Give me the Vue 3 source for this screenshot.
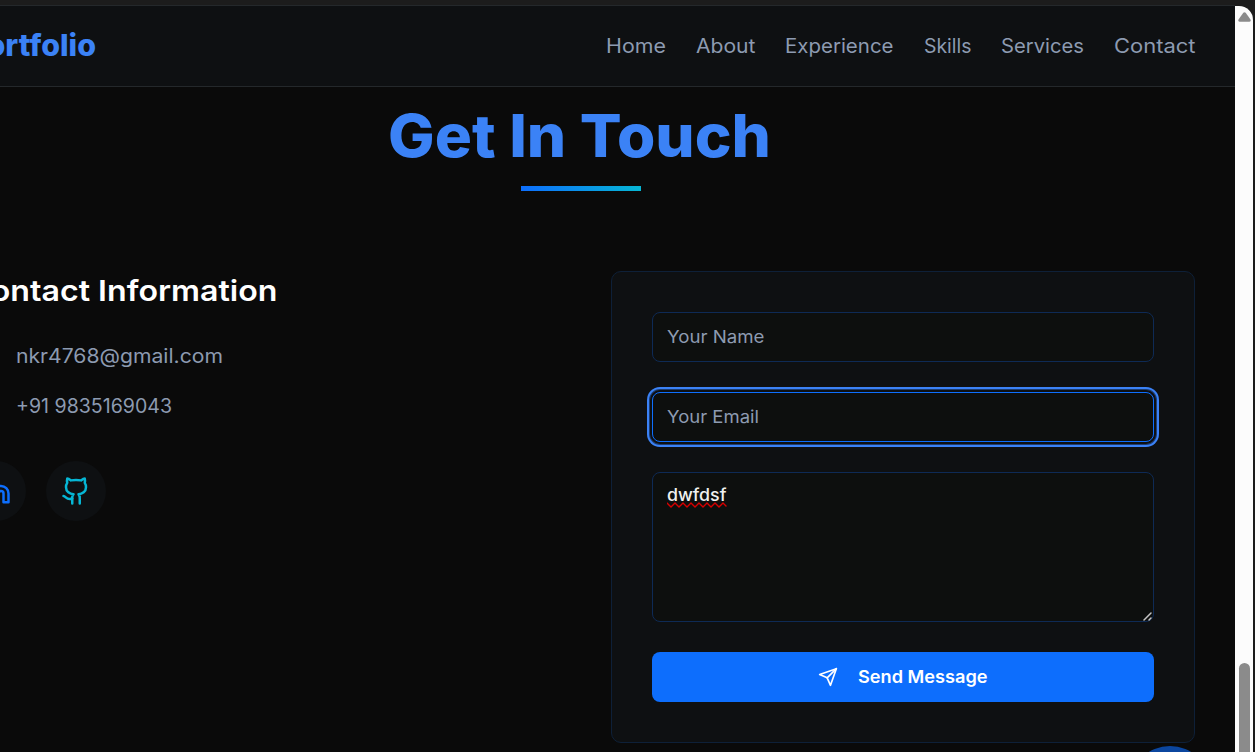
<script setup>
const links = [
  { label: 'Home', width: 60 },
  { label: 'About', width: 59.5 },
  { label: 'Experience', width: 108.5 },
  { label: 'Skills', width: 47.5 },
  { label: 'Services', width: 83 },
  { label: 'Contact', width: 81.5 }
]

// Widens the letterforms of a single line of text so that it spans the given width.
const vFit = {
  mounted(el, { value }) {
    const natural = el.getBoundingClientRect().width
    el.style.width = `${value}px`
    el.style.transform = `scaleX(${value / natural})`
  }
}
</script>

<template>
  <div class="window">
    <div class="page">
      <header class="header">
        <div class="logo"><span v-fit="129" class="fit">Portfolio</span></div>
        <nav class="nav">
          <a v-for="link in links" :key="link.label" v-fit="link.width" class="fit">{{ link.label }}</a>
        </nav>
      </header>

      <main class="contact">
        <h1 class="title"><span v-fit="383" class="fit">Get In Touch</span></h1>
        <div class="rule"></div>

        <div class="columns">
          <section class="info">
            <h2><span v-fit="310.5" class="fit">Contact Information</span></h2>
            <p><span v-fit="207" class="fit">nkr4768@gmail.com</span></p>
            <p><span v-fit="156" class="fit">+91 9835169043</span></p>
            <div class="social">
              <a class="circle linkedin">
                <svg viewBox="0 0 24 24"><path d="M16 8a6 6 0 0 1 6 6v7h-4v-7a2 2 0 0 0-4 0v7h-4v-7a6 6 0 0 1 6-6z" /><path d="M2 9h4v12H2z" /><circle cx="4" cy="4" r="2" /></svg>
              </a>
              <a class="circle github">
                <svg viewBox="0 0 24 24"><path d="M15 22v-4a4.8 4.8 0 0 0-1-3.5c3 0 6-2 6-5.5.08-1.25-.27-2.48-1-3.5.28-1.15.28-2.35 0-3.5 0 0-1 0-3 1.5-2.64-.5-5.36-.5-8 0C6 2 5 2 5 2c-.3 1.15-.3 2.35 0 3.5A5.4 5.4 0 0 0 4 9c0 3.5 3 5.5 6 5.5-.39.49-.68 1.05-.85 1.65S8.93 17.38 9 18v4" /><path d="M9 18c-4.51 2-5-2-7-2" /></svg>
              </a>
            </div>
          </section>

          <form class="card" @submit.prevent>
            <div class="field"><span v-fit="97.5" class="fit">Your Name</span></div>
            <div class="field focused"><span v-fit="92" class="fit">Your Email</span></div>
            <div class="field message">
              <span class="misspelled">
                <span v-fit="59.5" class="fit">dwfdsf</span>
                <svg class="squiggle" viewBox="0 0 60 6"><path d="M0 1 L4 5 L8 1 L12 5 L16 1 L20 5 L24 1 L28 5 L32 1 L36 5 L40 1 L44 5 L48 1 L52 5 L56 1 L59 4" /></svg>
              </span>
              <svg class="grip" viewBox="0 0 9 9"><path d="M1 8 8 1M6 8 8 6" /></svg>
            </div>
            <button class="send">
              <svg viewBox="0 0 24 24"><path d="m22 2-7 20-4-9-9-4Z" /><path d="M22 2 11 13" /></svg>
              <span v-fit="129.5" class="fit">Send Message</span>
            </button>
          </form>
        </div>
      </main>
      <div class="to-top"></div>
    </div>

    <div class="scrollbar">
      <svg class="arrow" viewBox="0 0 13 10"><path d="M5.3.8Q6.5-.4 7.7.8L12.5 7.4Q13.3 9.6 11.5 9.7H1.5Q-.3 9.6.5 7.4Z" /></svg>
      <div class="thumb"></div>
    </div>
  </div>
</template>

<style>
body {
  margin: 0;
  overflow: hidden;
  background: #1c1c1c;
}
</style>

<style scoped>
.window {
  box-sizing: border-box;
  display: flex;
  width: 1255px;
  height: 752px;
  padding: 5px 2px 0 0;
  overflow: hidden;
  background: #1c1c1c;
  font-family: Inter, "Open Sans", sans-serif;
}
.fit {
  display: inline-block;
  text-align: left;
  transform-origin: left center;
  white-space: nowrap;
}
svg {
  fill: none;
  stroke: currentColor;
  stroke-width: 2;
  stroke-linecap: round;
  stroke-linejoin: round;
}
.page {
  position: relative;
  box-sizing: border-box;
  width: 1235px;
  height: 747px;
  overflow: hidden;
  border-top: 1px solid #24282b;
  background: #0a0a0a;
}
.header {
  display: flex;
  align-items: center;
  justify-content: space-between;
  box-sizing: border-box;
  height: 81px;
  padding-right: 39.5px;
  border-bottom: 1px solid #24282b;
  background: #0e1012;
}
.logo {
  width: 129px;
  margin: 0 0 2px -33px;
  color: #3b82f6;
  font-size: 30px;
  font-weight: 800;
}
.nav {
  display: flex;
  gap: 30px;
  color: #8d9bb1;
  font-size: 19.5px;
  line-height: 30px;
}
.contact { margin: 0 40px 0 -33px; }
.title {
  margin: 0 3px 0 0;
  padding-top: 9px;
  color: #3b82f6;
  font-size: 59px;
  font-weight: 800;
  line-height: 80px;
  text-align: center;
}
.rule {
  width: 120px;
  height: 5px;
  margin: 10px auto 80px;
  background: linear-gradient(90deg, #0d6efd, #06b6d4);
}
.columns {
  display: grid;
  grid-template-columns: 1fr 1fr;
  gap: 60px;
}
h2 {
  margin: 0 0 30px;
  color: #fff;
  font-size: 29px;
  font-weight: 600;
  line-height: 40px;
}
p {
  margin: 0 0 20px;
  padding-left: 48.5px;
  color: #8d9bb1;
  font-size: 19.5px;
  line-height: 30px;
}
.social {
  display: flex;
  gap: 20px;
  margin: 40px 0 0 -1px;
}
.circle {
  display: flex;
  align-items: center;
  justify-content: center;
  width: 60px;
  height: 60px;
  border-radius: 50%;
  background: #0e1012;
}
.circle svg { width: 30px; height: 30px; }
.linkedin { color: #0d6efd; }
.github { color: #06b6d4; }
.card {
  display: flex;
  flex-direction: column;
  gap: 30px;
  box-sizing: border-box;
  height: 472px;
  padding: 40px;
  border: 1px solid #0e2038;
  border-radius: 10px;
  background: #0e1012;
}
.field {
  position: relative;
  box-sizing: border-box;
  height: 50px;
  padding: 0 14px;
  border: 1px solid #0e2a55;
  border-radius: 8px;
  background: #0d0f0e;
  color: #8d9bb1;
  font-size: 17.3px;
  line-height: 48px;
}
.focused {
  border-color: #0d6efd;
  box-shadow: 0 0 0 2px #0e1012, 0 0 0 3px #1d3c70, 0 0 0 5px #3b82f6;
}
.message {
  height: 150px;
  color: #f1f1f1;
  font-weight: 500;
  line-height: 44px;
}
.misspelled { position: relative; display: inline-block; }
.squiggle {
  position: absolute;
  top: 29px;
  left: 0;
  width: 60px;
  height: 6px;
  color: #d80000;
  stroke-width: 1.4;
}
.grip {
  position: absolute;
  right: 1px;
  bottom: 0;
  width: 9px;
  height: 9px;
  color: #c4c4c4;
  stroke-width: 1.5;
}
.send {
  display: flex;
  align-items: center;
  justify-content: center;
  gap: 20px;
  height: 50px;
  padding: 0;
  border: 0;
  border-radius: 8px;
  background: #0d6efd;
  color: #fff;
  font-family: inherit;
  font-size: 17.3px;
  font-weight: 600;
}
.send svg { width: 20px; height: 20px; }
.send .fit { margin-bottom: 2px; }
.to-top {
  position: absolute;
  top: 740px;
  left: 1130px;
  width: 80px;
  height: 80px;
  border-radius: 50%;
  background: #0b469f;
}
.scrollbar {
  display: flex;
  flex-direction: column;
  align-items: center;
  justify-content: space-between;
  box-sizing: border-box;
  width: 18px;
  height: 746px;
  margin-top: 1px;
  padding: 6px 0 0 1px;
  border-top-right-radius: 14px;
  background: #fcfcfc;
}
.arrow {
  width: 13px;
  height: 10px;
  fill: #8b8b8b;
  stroke: none;
}
.thumb {
  width: 11px;
  height: 89px;
  border-radius: 6px 6px 0 0;
  background: #8b8b8b;
}
</style>
